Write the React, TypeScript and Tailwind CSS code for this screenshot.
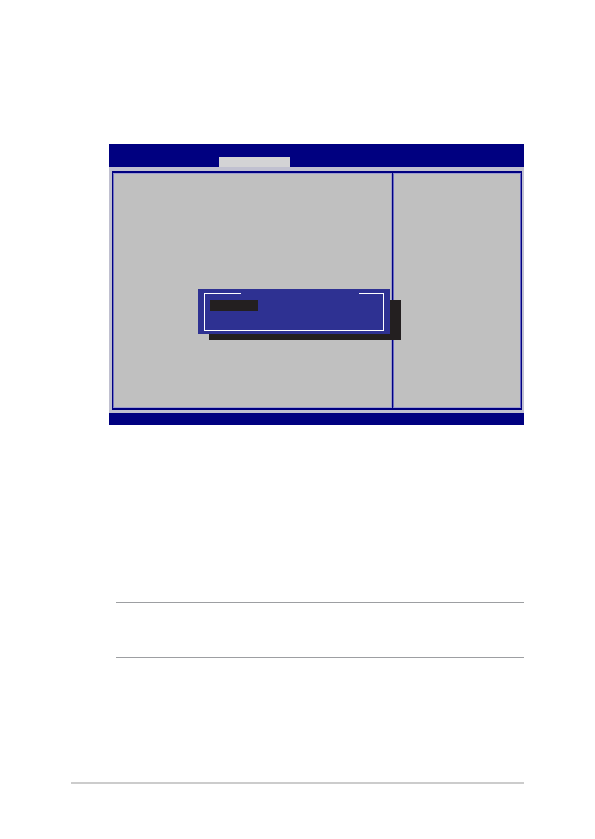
function TitleBar() {
  return (
    <header className="flex h-[23px] items-end bg-[#000080] pl-[110px]">
      <div className="h-[10px] w-[71px] bg-[#d3d3d5]" />
    </header>
  );
}

function Panels() {
  return (
    <div className="bg-[#c0c0d0] pt-1 pr-[2px] pb-[3px] pl-[3px]">
      <div className="flex h-[239px] border-x border-y-2 border-[#000080] bg-[#c0c0c0]">
        <section className="flex-1 border border-y-[#9c9cd0] border-r-[#9c9cc8] border-l-[#7474c4]" />
        <section className="w-[129px] border-l border-[#000080]">
          <div className="h-full border border-x-[#6a6ac4] border-y-[#9c9cd0]" />
        </section>
      </div>
    </div>
  );
}

function PopupMenu() {
  return (
    <div className="absolute top-[145px] left-[89px] h-[51px] w-[203px]">
      <div className="absolute right-0 bottom-0 h-10 w-48 bg-[#231f20]" />
      <div className="relative h-[45px] w-48 bg-[#2e3192] px-[6px] pt-1">
        <fieldset className="h-[38px] border border-white px-[5px]">
          <legend className="ml-[31px] h-px w-[118px]" />
          <div className="mt-[6px] h-[11px] w-12 bg-[#231f20]" />
        </fieldset>
      </div>
    </div>
  );
}

export default function App() {
  return (
    <div className="min-h-screen bg-white px-[71px] pt-36 font-['Liberation_Sans',sans-serif]">
      <main className="pl-[38px]">
        <div className="relative">
          <TitleBar />
          <Panels />
          <footer className="h-3 bg-[#000080]" />
          <PopupMenu />
        </div>
        <div className="mt-[177px] ml-[7px] h-14 border-y border-[#9d9fa2]" />
      </main>
      <hr className="mt-[124px] border-t-2 border-[#cccccc]" />
    </div>
  );
}
